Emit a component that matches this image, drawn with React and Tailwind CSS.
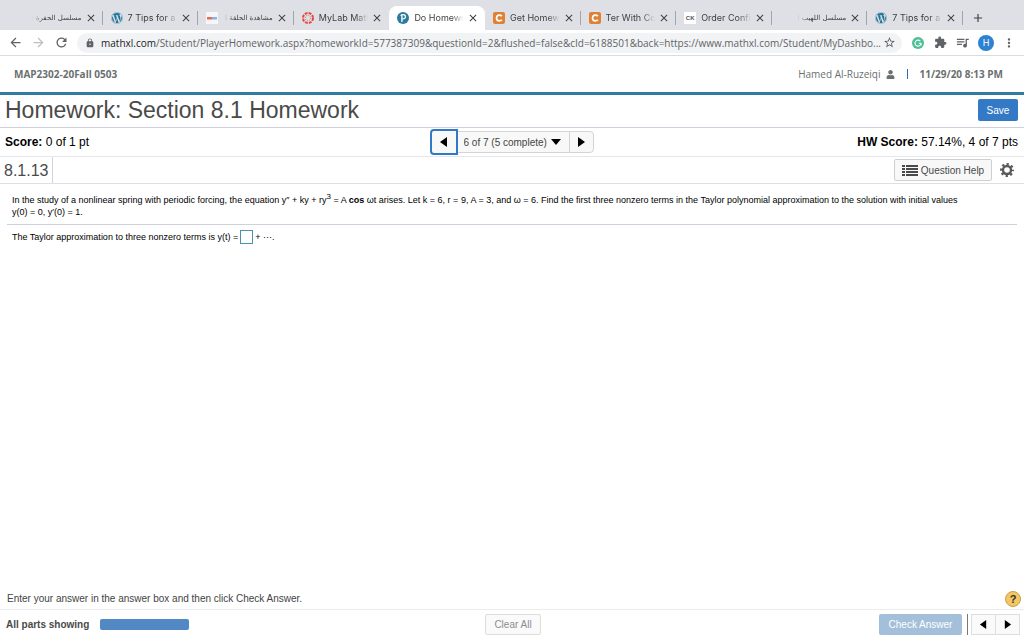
import { MdAdd, MdArrowBack, MdArrowForward, MdClose, MdExtension, MdLock, MdMoreVert, MdQueueMusic, MdRefresh, MdStarBorder } from "react-icons/md";
import { FaUser, FaWordpress } from "react-icons/fa";

const tabs = [
  { id: 1, title: "مسلسل الحفرة ا", rtl: true },
  { id: 2, title: "7 Tips for a s", icon: "wordpress" },
  { id: 3, title: "مشاهدة الحلقة ا", icon: "video", rtl: true },
  { id: 4, title: "MyLab Math", icon: "canvas" },
  { id: 5, title: "Do Homewo", icon: "pearson", active: true },
  { id: 6, title: "Get Homew", icon: "chegg" },
  { id: 7, title: "Ter With Cor", icon: "chegg" },
  { id: 8, title: "Order Confir", icon: "ck" },
  { id: 9, title: "مسلسل اللهيب ا", rtl: true },
  { id: 10, title: "7 Tips for a s", icon: "wordpress" },
];

const TabIcon = ({ name }) => {
  if (name === "wordpress") return <FaWordpress className="size-3 shrink-0 text-[#21759b]" />;
  if (name === "video")
    return (
      <svg viewBox="0 0 12 12" className="size-3 shrink-0">
        <rect width="12" height="12" fill="#f6f6f8" />
        <rect x="1" y="5" width="5" height="2.5" fill="#e8685c" />
        <rect x="6" y="5" width="5" height="2.5" fill="#85b5e2" />
      </svg>
    );
  if (name === "canvas")
    return (
      <svg viewBox="0 0 12 12" className="size-3 shrink-0" fill="none" stroke="#e0473d">
        <circle cx="6" cy="6" r="5" strokeWidth="2" strokeDasharray="2.9 1.027" />
        <circle cx="6" cy="6" r="2.7" strokeWidth="0.9" strokeDasharray="0.9 1.22" />
      </svg>
    );
  if (name === "pearson")
    return (
      <svg viewBox="0 0 12 12" className="size-3 shrink-0">
        <circle cx="6" cy="6" r="6" fill="#2a7c9c" />
        <path d="M4.9 10V3.2M3.6 3.6C5 2.2 8.5 2.2 8.5 4.6C8.5 6.5 6.6 7 5.6 6.8" fill="none" stroke="#fff" strokeWidth="1.3" />
      </svg>
    );
  if (name === "chegg")
    return (
      <svg viewBox="0 0 12 12" className="size-3 shrink-0">
        <rect width="12" height="12" rx="2" fill="#e08033" />
        <path d="M8.8 4.2C8.3 3.4 7.5 3.2 6.2 3.2C4.3 3.2 3.5 4.3 3.5 6S4.3 8.8 6.2 8.8C7.5 8.8 8.3 8.6 8.8 7.8" fill="none" stroke="#fff" strokeWidth="1.7" />
      </svg>
    );
  if (name === "ck") return <span className="flex size-3 shrink-0 items-center justify-center bg-white font-['Liberation_Sans',sans-serif] text-[6px] font-bold text-[#555]">CK</span>;
  return <span className="size-3 shrink-0" />;
};

const BrowserTab = ({ tab }) => (
  <div className={`flex min-w-0 flex-1 items-center ${tab.active ? "rounded-t-lg bg-white" : ""}`}>
    <div className="flex min-w-0 flex-1 items-center gap-[5px] pl-2">
      <TabIcon name={tab.icon} />
      {tab.rtl ? (
        <span dir="rtl" className="min-w-0 flex-1 whitespace-nowrap font-['DejaVu_Sans',sans-serif] text-[7px] leading-4 text-[#3c4043] [mask-image:linear-gradient(to_left,#000_75%,transparent)]">
          {tab.title}
        </span>
      ) : (
        <span className="min-w-0 flex-1 whitespace-nowrap text-[9px] leading-4 text-[#3c4043] [mask-image:linear-gradient(to_right,#000_75%,transparent)]">{tab.title}</span>
      )}
    </div>
    <button aria-label="Close tab" className="ml-[3px] shrink-0">
      <MdClose className="size-3 text-[#3c4043]" />
    </button>
    <span className={`ml-[5px] h-[14px] w-px ${tab.active || tab.id === 4 ? "bg-transparent" : "bg-[#a3a5a9]"}`} />
  </div>
);

const Browser = () => (
  <header className="font-[Inter,sans-serif]">
    <div className="flex h-[30px] bg-[#dfe0e5] pl-[7px] pt-[6px]">
      {tabs.map((tab) => (
        <BrowserTab key={tab.id} tab={tab} />
      ))}
      <button aria-label="New tab" className="flex w-[61px] items-center pl-2">
        <MdAdd className="size-[14px] text-[#3c4043]" />
      </button>
    </div>

    {/* Address bar */}
    <div className="flex h-[26px] items-center border-b border-[#dadce0] bg-white px-2 text-[#5f6368]">
      <div className="flex gap-2">
        <button aria-label="Back">
          <MdArrowBack className="size-[15px]" />
        </button>
        <button aria-label="Forward">
          <MdArrowForward className="size-[15px] text-[#bcbec1]" />
        </button>
        <button aria-label="Reload">
          <MdRefresh className="size-[15px]" />
        </button>
      </div>
      <div className="ml-2 flex h-5 min-w-0 flex-1 items-center rounded-full bg-[#f1f3f4] pl-2 pr-[6px]">
        <MdLock className="size-[10px] shrink-0" />
        <p className="ml-[6px] min-w-0 flex-1 whitespace-nowrap font-['Open_Sans',sans-serif] text-[10px] leading-4">
          <span className="text-[#202124]">mathxl.com</span>
          /Student/PlayerHomework.aspx?homeworkId=577387309&amp;questionId=2&amp;flushed=false&amp;cId=6188501&amp;back=https://www.mathxl.com/Student/MyDashbo...
        </p>
        <button aria-label="Bookmark" className="ml-2">
          <MdStarBorder className="size-[13px]" />
        </button>
      </div>
      <div className="ml-[10px] flex items-center gap-2">
        <button aria-label="Grammarly" className="mr-0.5">
          <svg viewBox="0 0 12 12" className="size-3">
            <circle cx="6" cy="6" r="6" fill="#4bbf95" />
            <path d="M8.3 4.2A3 3 0 1 0 9 6.3H6.7M9 6.3V8.6" fill="none" stroke="#fff" strokeWidth="1.1" />
          </svg>
        </button>
        <button aria-label="Extensions">
          <MdExtension className="size-[13px]" />
        </button>
        <button aria-label="Media">
          <MdQueueMusic className="size-[15px]" />
        </button>
        <button className="size-4 rounded-full bg-[#2f82d0] text-[9px] leading-4 text-white">H</button>
        <button aria-label="Menu">
          <MdMoreVert className="size-[14px]" />
        </button>
      </div>
    </div>
  </header>
);

const Triangle = ({ points, className }) => (
  <svg viewBox="0 0 10 10" className={className}>
    <polygon points={points} fill="#000" />
  </svg>
);

const LEFT = "8,0 8,10 1,5";
const RIGHT = "2,0 2,10 9,5";
const DOWN = "0,2 10,2 5,8";

const QuestionNav = () => (
  <div className="flex items-center">
    <button aria-label="Previous question" className="flex h-[26px] w-7 items-center justify-center rounded-l-sm border-2 border-[#3079c8] bg-[#f8f8f8]">
      <Triangle points={LEFT} className="size-[10px]" />
    </button>
    <div className="relative">
      <select aria-label="Question" className="h-[22px] w-[111px] appearance-none border-y border-[#d4d4d4] bg-[#f8f8f8] pl-[6px] text-[10px] text-[#444]">
        <option>6 of 7 (5 complete)</option>
        <option>7 of 7 (5 complete)</option>
      </select>
      <Triangle points={DOWN} className="pointer-events-none absolute right-2 top-[6px] size-[10px]" />
    </div>
    <button aria-label="Next question" className="flex h-[22px] w-[25px] items-center justify-center rounded-r-sm border border-[#d4d4d4] bg-[#f8f8f8]">
      <Triangle points={RIGHT} className="size-[10px]" />
    </button>
  </div>
);

const Question = () => (
  <main className="flex-1 pl-3 pr-[7px] pt-[10px] text-[9px] leading-3 text-black">
    <p className="pr-8">
      In the study of a nonlinear spring with periodic forcing, the equation y′′ + ky + ry<sup className="text-[8px]">3</sup> = A <b>cos</b> ωt arises. Let k = 6, r = 9, A = 3, and ω = 6. Find the first three nonzero terms in the Taylor polynomial approximation to the solution with initial values{" "}
      <span className="whitespace-nowrap">y(0) = 0, y′(0) = 1.</span>
    </p>
    <hr className="-ml-[5px] mt-[6px] border-[#cfd0dc]" />
    <div className="mt-[5px] flex items-center">
      <label htmlFor="answer">The Taylor approximation to three nonzero terms is y(t) =</label>
      <input id="answer" className="mx-0.5 h-[14px] w-[13px] border border-[#4d8fb0] bg-white" />
      <span>+ ···.</span>
    </div>
  </main>
);

export default function App() {
  return (
    <div className="flex min-h-screen flex-col bg-white font-['Liberation_Sans',Arial,sans-serif]">
      <Browser />

      {/* Course bar */}
      <div className="flex h-[39px] items-center justify-between border-b-[3px] border-[#2f7c9e] pl-[14px] pr-[21px] font-['Open_Sans',sans-serif] text-[10px] text-[#6a7070]">
        <b>MAP2302-20Fall 0503</b>
        <div className="flex items-center">
          <span>Hamed Al-Ruzeiqi</span>
          <FaUser className="ml-[5px] size-[9px]" />
          <span className="mx-3 h-[10px] w-px bg-[#2f6eb5]" />
          <b>11/29/20 8:13 PM</b>
        </div>
      </div>

      <div className="flex h-[33px] items-center justify-between border-b border-[#d0d0dc] pb-0.5 pl-[5px] pr-[6px]">
        <h1 className="text-[23px] leading-[30px] text-[#4a4a4a]">Homework: Section 8.1 Homework</h1>
        <button className="h-[22px] w-10 rounded-xs bg-[#3379c6] text-[10px] text-white">Save</button>
      </div>

      <div className="grid h-[29px] grid-cols-[1fr_auto_1fr] items-center border-b border-[#e6e7ec] pl-[5px] pr-[6px] text-[12px] text-black">
        <p>
          <b>Score:</b> 0 of 1 pt
        </p>
        <QuestionNav />
        <p className="text-right">
          <b>HW Score:</b> 57.14%, 4 of 7 pts
        </p>
      </div>

      <div className="flex h-[27px] items-center justify-between border-b border-[#dedfe6] pl-1 pr-[10px]">
        <h2 className="flex h-full w-[49px] items-center border-r border-[#cfd3e0] pt-0.5 text-[16px] text-[#4a4a4a]">8.1.13</h2>
        <div className="flex items-center gap-2">
          <button className="flex h-[22px] w-[98px] items-center justify-center gap-[3px] rounded-xs border border-[#cfcfcf] bg-[#f8f8f8] text-[10px] text-[#4a4a4a]">
            <svg viewBox="0 0 16 11" className="h-[11px] w-4" fill="#4a4a4a">
              <path d="M0 0h3v2H0zM4 0h12v2H4zM0 3h3v2H0zM4 3h12v2H4zM0 6h3v2H0zM4 6h12v2H4zM0 9h3v2H0zM4 9h12v2H4z" />
            </svg>
            Question Help
          </button>
          <button aria-label="Settings">
            <svg viewBox="0 0 14 14" className="size-[14px]" fill="none" stroke="#5a5a5a">
              <circle cx="7" cy="7" r="4" strokeWidth="2.4" />
              <circle cx="7" cy="7" r="5.9" strokeWidth="2.2" strokeDasharray="2.3 2.334" strokeDashoffset="1.15" />
            </svg>
          </button>
        </div>
      </div>

      <Question />

      <div className="flex h-[22px] items-center justify-between border-b border-[#ececec] pl-[7px] pr-[3px] text-[10px] text-[#444]">
        <p>Enter your answer in the answer box and then click Check Answer.</p>
        <button aria-label="Help" className="size-4 rounded-full border border-[#c9a04c] bg-[#f2c763] text-[11px] font-bold leading-[14px] text-[#333]">
          ?
        </button>
      </div>
      <footer className="grid h-[30px] grid-cols-[1fr_auto_1fr] items-center pb-0.5 pl-[6px] pr-1 text-[10px]">
        <div className="flex items-center gap-[11px]">
          <b className="text-[#4a4a4a]">All parts showing</b>
          <span className="h-[11px] w-[89px] rounded-xs bg-[#5289c4]" />
        </div>
        <button className="h-[21px] w-14 rounded-xs border border-[#dedede] bg-[#fafafa] text-[#8c8c8c]">Clear All</button>
        <div className="flex items-center justify-end">
          <button className="h-[21px] w-[83px] rounded-xs bg-[#a4bfda] text-white">Check Answer</button>
          <span className="ml-[5px] mr-[3px] h-[21px] w-px bg-[#777]" />
          <button aria-label="Previous part" className="flex h-[21px] w-6 items-center justify-center border border-r-0 border-[#dedede] bg-[#fafafa]">
            <Triangle points={LEFT} className="size-[9px]" />
          </button>
          <button aria-label="Next part" className="flex h-[21px] w-[25px] items-center justify-center border border-[#dedede] bg-[#fafafa]">
            <Triangle points={RIGHT} className="size-[9px]" />
          </button>
        </div>
      </footer>
    </div>
  );
}
